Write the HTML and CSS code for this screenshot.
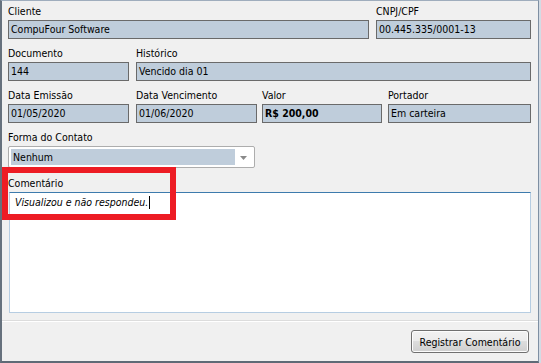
FILE: index.html
```html
<!DOCTYPE html>
<html lang="pt-BR">
<head>
<meta charset="utf-8">
<title>Comentário</title>
<link rel="stylesheet" href="styles.css">
</head>
<body>
<div class="window">
  <div class="form">
    <div class="row">
      <div class="field w-cliente">
        <div class="label">Cliente</div>
        <div class="input">CompuFour Software</div>
      </div>
      <div class="field w-cnpj gap7">
        <div class="label">CNPJ/CPF</div>
        <div class="input">00.445.335/0001-13</div>
      </div>
    </div>
    <div class="row">
      <div class="field w-doc">
        <div class="label">Documento</div>
        <div class="input">144</div>
      </div>
      <div class="field w-hist gap7">
        <div class="label">Histórico</div>
        <div class="input">Vencido dia 01</div>
      </div>
    </div>
    <div class="row">
      <div class="field w-doc">
        <div class="label">Data Emissão</div>
        <div class="input">01/05/2020</div>
      </div>
      <div class="field w-venc gap7">
        <div class="label">Data Vencimento</div>
        <div class="input">01/06/2020</div>
      </div>
      <div class="field w-valor gap5">
        <div class="label">Valor</div>
        <div class="input bold">R$ 200,00</div>
      </div>
      <div class="field w-port gap6">
        <div class="label">Portador</div>
        <div class="input">Em carteira</div>
      </div>
    </div>
    <div class="row">
      <div class="field w-combo">
        <div class="label">Forma do Contato</div>
        <div class="combo">
          <div class="combo-value">Nenhum</div>
          <div class="combo-btn">
            <svg width="7" height="4" viewBox="0 0 7 4"><path d="M0 0H7L3.5 4Z" fill="#8a8a8a"/></svg>
          </div>
        </div>
      </div>
    </div>
    <div class="memo-field">
      <div class="label">Comentário</div>
      <div class="memo"><span class="memo-text">Visualizou e não respondeu.</span><span class="caret"></span></div>
    </div>
  </div>
  <div class="footer">
    <button class="btn" type="button">Registrar Comentário</button>
  </div>
  <div class="highlight"></div>
</div>
</body>
</html>
```

FILE: styles.css
```css
html, body {
  margin: 0;
  padding: 0;
  background: #d3dbe4;
}

body {
  width: 541px;
  height: 363px;
  overflow: hidden;
  font-family: "DejaVu Sans Condensed", "Liberation Sans", sans-serif;
  font-size: 10.5px;
  color: #000;
}

.window {
  position: relative;
  box-sizing: border-box;
  width: 539px;
  height: 363px;
  background: #f0f0f0;
  border-left: 2px solid #66717d;
  border-top: 1px solid #9fadbd;
  border-right: 1px solid #7e8fa2;
  border-bottom: 2px solid #5f6a76;
  display: flex;
  flex-direction: column;
}

.form {
  padding: 3px 0 0 6px;
  height: 319px;
  box-sizing: border-box;
}

.row {
  display: flex;
  margin-bottom: 7px;
}

.field {
  display: flex;
  flex-direction: column;
}

.label {
  height: 14px;
  line-height: 14px;
  margin-bottom: 2px;
  white-space: nowrap;
}

.input {
  box-sizing: border-box;
  height: 19px;
  line-height: 17px;
  background: #bfcddb;
  border: 1px solid #6a6a6a;
  padding-left: 2px;
  white-space: nowrap;
  overflow: hidden;
}

.bold { font-weight: bold; }

.gap5 { margin-left: 5px; }
.gap6 { margin-left: 6px; }
.gap7 { margin-left: 7px; }

.w-cliente { width: 361px; }
.w-cnpj { width: 155px; }
.w-doc { width: 121px; }
.w-hist { width: 395px; }
.w-venc { width: 121px; }
.w-valor { width: 120px; }
.w-port { width: 143px; }
.w-combo { width: 247px; }

.row:nth-child(4) { margin-bottom: 8px; }

.combo {
  box-sizing: border-box;
  height: 22px;
  background: #fff;
  border: 1px solid #adadad;
  border-radius: 2px;
  padding: 2px;
  display: flex;
}

.combo-value {
  flex: 1;
  background: #bfcddb;
  line-height: 16px;
  padding-left: 2px;
}

.combo-btn {
  width: 17px;
  display: flex;
  align-items: center;
  justify-content: center;
  padding-top: 1px;
}

.memo-field {
  display: flex;
  flex-direction: column;
}

.memo {
  box-sizing: border-box;
  width: 522px;
  height: 121px;
  margin-left: 1px;
  background: #fff;
  border: 1px solid #b6cde2;
  border-top-color: #3d7bad;
  padding: 2px 0 0 5px;
  line-height: 14px;
}

.memo-text {
  font-style: italic;
}

.caret {
  display: inline-block;
  width: 1px;
  height: 13px;
  background: #000;
  vertical-align: -3px;
  margin-left: 1px;
}

.footer {
  flex: 1;
  border-top: 1px solid #dcdcdc;
  box-shadow: inset 0 1px 0 #ffffff;
  display: flex;
  justify-content: flex-end;
  align-items: flex-start;
  padding: 9px 9px 0 0;
}

.btn {
  box-sizing: border-box;
  width: 118px;
  height: 23px;
  border: 1px solid #707070;
  border-radius: 3px;
  background: linear-gradient(to bottom, #f2f2f2 0%, #ebebeb 50%, #dddddd 50%, #cfcfcf 100%);
  box-shadow: inset 0 0 0 1px #fcfcfc;
  font-family: inherit;
  font-size: inherit;
  color: #000;
  padding: 0;
  line-height: 20px;
}

.highlight {
  position: absolute;
  left: 0;
  top: 166px;
  width: 174px;
  height: 53px;
  box-sizing: border-box;
  border: 6px solid #ed1c24;
}
```
